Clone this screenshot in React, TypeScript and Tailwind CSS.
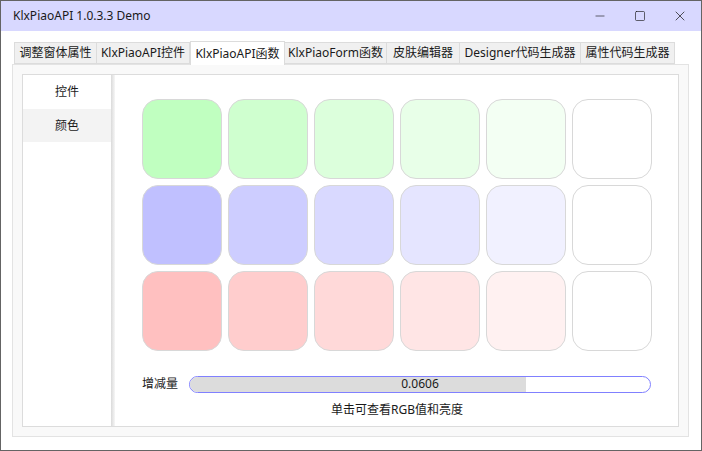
import { Minus, Square, X } from 'lucide-react'

const tabs = [
  { label: '调整窗体属性', w: 'w-[83px]' },
  { label: 'KlxPiaoAPI控件', w: 'w-[93px]' },
  { label: 'KlxPiaoAPI函数', w: 'w-[95px]', active: true },
  { label: 'KlxPiaoForm函数', w: 'w-[102px]' },
  { label: '皮肤编辑器', w: 'w-[73px]' },
  { label: 'Designer代码生成器', w: 'w-[121px]' },
  { label: '属性代码生成器', w: 'w-[94px]' },
]

const rows = [
  ['#c0ffc0', '#cfffcf', '#dcffdc', '#e8ffe8', '#f3fff3', '#ffffff'],
  ['#c0c0ff', '#cdcdff', '#d9d9ff', '#e5e5ff', '#f1f1ff', '#ffffff'],
  ['#ffc0c0', '#ffcdcd', '#ffd9d9', '#ffe5e5', '#fff1f1', '#ffffff'],
]

const font = { fontFamily: '"Noto Sans", "Noto Sans CJK SC", sans-serif' }

export default function App() {
  return (
    <div
      className="w-[702px] h-[451px] border border-[#646464] bg-white flex flex-col text-[#1a1a1a] overflow-hidden"
      style={font}
    >
      {/* Title bar */}
      <div className="h-[30px] bg-[#d8d8ff] flex items-center shrink-0">
        <span className="pl-[12px] text-[12px] flex-1">KlxPiaoAPI 1.0.3.3 Demo</span>
        <div className="flex items-center h-full pr-[1px]">
          <div className="w-[40px] h-full flex items-center justify-center">
            <Minus size={14} strokeWidth={1.1} />
          </div>
          <div className="w-[40px] h-full flex items-center justify-center">
            <Square size={12} strokeWidth={1.3} />
          </div>
          <div className="w-[40px] h-full flex items-center justify-center">
            <X size={16} strokeWidth={1.1} />
          </div>
        </div>
      </div>

      {/* Tabs */}
      <div className="flex items-end pl-[13px] pt-[10px] h-[33px] shrink-0">
        {tabs.map((t) => (
          <div
            key={t.label}
            className={
              t.active
                ? `${t.w} h-[24px] -mb-px relative z-10 bg-white border border-b-0 border-[#dcdcdc] flex items-center justify-center text-[12px]`
                : `${t.w} h-[22px] bg-[#f0f0f0] border border-[#dcdcdc] border-l-0 first:border-l flex items-center justify-center text-[12px]`
            }
          >
            {t.label}
          </div>
        ))}
      </div>

      {/* Tab content */}
      <div className="ml-[11px] w-[677px] h-[373px] border border-[#e3e3e3] bg-[#f9f9f9] p-[9px]">
        <div className="w-full h-full border border-[#dcdcdc] bg-white flex">
          {/* Sidebar */}
          <div className="w-[88px] flex flex-col text-[12px] shrink-0">
            <div className="h-[34px] flex items-center justify-center">控件</div>
            <div className="h-[33px] flex items-center justify-center bg-[#f3f3f3]">颜色</div>
          </div>
          <div className="w-[4px] bg-gradient-to-r from-[#dadada] to-[#f6f6f6] shrink-0" />

          {/* Main area */}
          <div className="flex-1 flex flex-col pl-[27px] pt-[24px]">
            <div className="grid grid-cols-[repeat(6,80px)] gap-[6px]">
              {rows.flat().map((c, i) => (
                <div
                  key={i}
                  className="w-[80px] h-[80px] rounded-[16px] border border-[#d8d8d8]"
                  style={{ backgroundColor: c }}
                />
              ))}
            </div>

            <div className="flex items-center mt-[25px] h-[16px]">
              <span className="w-[47px] text-[12px]">增减量</span>
              <div className="relative w-[462px] h-[17px] rounded-full border-[1.5px] border-[#8080ff] overflow-hidden bg-white">
                <div className="absolute left-0 top-0 bottom-0 w-[336px] bg-[#dcdcdc]" />
                <div className="absolute inset-0 flex items-center justify-center text-[12px] leading-none">
                  0.0606
                </div>
              </div>
            </div>

            <div className="w-[510px] text-center text-[12px] mt-[9px]">单击可查看RGB值和亮度</div>
          </div>
        </div>
      </div>
    </div>
  )
}
